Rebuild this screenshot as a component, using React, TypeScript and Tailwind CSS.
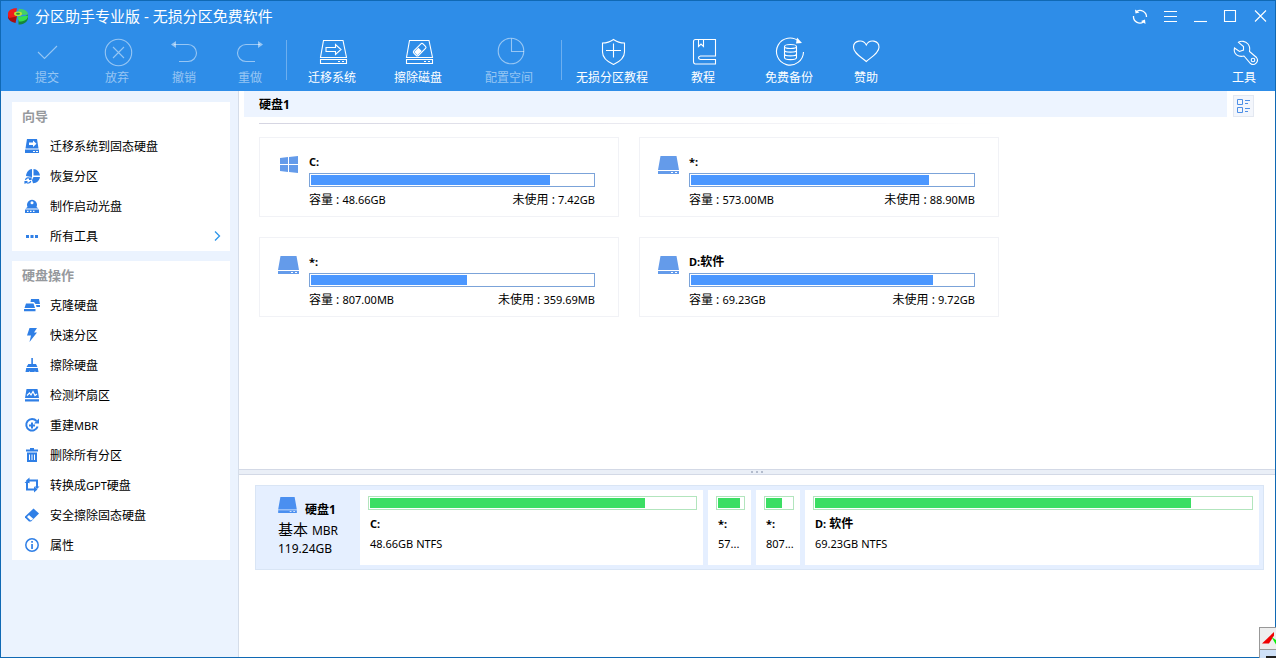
import type { ReactNode } from "react";

const stroke = { fill: "none", stroke: "currentColor", strokeWidth: 1.1 } as const;

/* ---------- toolbar icons, 32 x 32 ---------- */

const toolIcons: Record<string, ReactNode> = {
  check: <path d="M7 16l6.500 6.500L26 10" />,
  discard: (
    <>
      <circle cx="17.500" cy="16.500" r="13.200" />
      <path d="M12 11l11 11M23 11L12 22" />
    </>
  ),
  undo: (
    <>
      <path d="M6 8.500H20a8.500 8.500 0 0 1 0 17H11" />
      <path d="M3 8.500l5-3.500v7z" fill="currentColor" stroke="none" />
    </>
  ),
  redo: (
    <>
      <path d="M26 8.500H12a8.500 8.500 0 0 0 0 17H21" />
      <path d="M29 8.500l-5-3.500v7z" fill="currentColor" stroke="none" />
    </>
  ),
  migrate: (
    <>
      <path d="M7.500 4.500h19.500L30.500 21.500H4.500z" />
      <path d="M4.500 23.500h26v4h-26z" />
      <path d="M22 25.500h2M26 25.500h2" />
      <path d="M10 11.500h9.500v-3l5.500 5-5.500 5v-3H10z" />
    </>
  ),
  wipe: (
    <>
      <path d="M7.500 4.500h19.500L30.500 21.500H4.500z" />
      <path d="M4.500 23.500h26v4h-26z" />
      <path d="M22 25.500h2M26 25.500h2" />
      <g transform="rotate(-45 17.500 13.500)">
        <rect x="11" y="10.500" width="13" height="6.500" rx="1.500" />
        <rect x="12.500" y="12" width="5" height="3.500" fill="currentColor" />
      </g>
    </>
  ),
  allocate: (
    <>
      <circle cx="18" cy="15" r="12.800" />
      <path d="M18.500 2.500v13H31" />
    </>
  ),
  shield: (
    <>
      <path d="M17.500 3.500C14 6 10 7 6.500 7v9c0 6 5.500 10 11 12.500 5.500-2.500 11-6.500 11-12.500V7C25 7 21 6 17.500 3.500z" />
      <path d="M17.500 7.500v14M10 14.500h15" />
    </>
  ),
  book: (
    <>
      <path d="M28.500 20V3.500h-20q-2 0-2 2v20q0 2.500 2 2.500h20v-4.500H13.500q-2-.2-2-1.700t2-1.800h15z" />
      <path d="M11.500 3.500v7l2.500-2.500 2.500 2.500v-7" />
    </>
  ),
  backup: (
    <>
      <path d="M26 5.500A13.500 13.500 0 1 0 30.500 16" />
      <path d="M24 1.500l5 5.500-6 .5z" fill="currentColor" stroke="none" />
      <ellipse cx="17.500" cy="10.500" rx="6" ry="2" />
      <path d="M11.500 10.500v11c0 2.800 12 2.800 12 0v-11M11.500 14.200c0 2.600 12 2.600 12 0M11.500 17.900c0 2.600 12 2.600 12 0" />
    </>
  ),
  heart: (
    <path d="M16.300 25.500C11 21 3.500 17 3.500 11.200 3.500 4.500 13 2.500 16.300 9 19.500 2.500 29 4.500 29 11.200 29 17 21.500 21 16.300 25.500z" />
  ),
  wrench: (
    <>
      <path d="M10.500 6.300C13 4.500 17.500 5 20 8c2 2.500 2 5 1.500 7.500l7 6c3 4-2 9-6 6L16 20C10.500 21.500 5 18 6.500 12l5 3.500 4-1.500v-3.500z" />
      <circle cx="25" cy="24" r="1.800" />
    </>
  ),
};

type Tool = { icon: string; label: string; width: string; disabled?: boolean };

function ToolButton({ icon, label, width, disabled }: Tool) {
  return (
    <button
      type="button"
      disabled={disabled}
      className={`flex shrink-0 flex-col items-center text-xs ${width} ${disabled ? "text-white/50" : "text-white"}`}
    >
      <svg width="32" height="32" viewBox="0 0 32 32" {...stroke} aria-hidden="true">
        {toolIcons[icon]}
      </svg>
      <span className="mt-[2px] leading-4 whitespace-nowrap">{label}</span>
    </button>
  );
}

const editTools: Tool[] = [
  { icon: "check", label: "提交", width: "w-[72px]", disabled: true },
  { icon: "discard", label: "放弃", width: "w-[68px]", disabled: true },
  { icon: "undo", label: "撤销", width: "w-[66px]", disabled: true },
  { icon: "redo", label: "重做", width: "w-[66px]", disabled: true },
];
const diskTools: Tool[] = [
  { icon: "migrate", label: "迁移系统", width: "w-[86px]" },
  { icon: "wipe", label: "擦除磁盘", width: "w-[86px]" },
  { icon: "allocate", label: "配置空间", width: "w-[96px]", disabled: true },
];
const helpTools: Tool[] = [
  { icon: "shield", label: "无损分区教程", width: "w-[98px]" },
  { icon: "book", label: "教程", width: "w-[84px]" },
  { icon: "backup", label: "免费备份", width: "w-[88px]" },
  { icon: "heart", label: "赞助", width: "w-[66px]" },
];

function Logo() {
  return (
    <svg width="20" height="17" viewBox="0 0 20 17" aria-hidden="true">
      <path d="M0 6v4c1 2.500 4 4.500 7.500 5L9 8z" fill="#a80d10" />
      <path d="M0 5C1 1.500 5 0 9 .3L8 5l1 3.500L1 10C0 8.500-.2 6.500 0 5z" fill="#ee1c1c" />
      <path d="M11 .8c5 .2 9 2.500 9 5.700L13 7l-3-2.500z" fill="#45cf63" />
      <path d="M20 6.500v4c-1 4-5 6-9.500 6V12z" fill="#16863a" />
      <path d="M20 7.500c0 4-4 6-9 6L9.500 9z" fill="#35e04c" />
      <ellipse cx="10" cy="5.800" rx="4" ry="2.400" fill="#b7e337" />
      <ellipse cx="10" cy="5.800" rx="2" ry="1" fill="#2a8f3f" />
    </svg>
  );
}

const windowControls: { label: string; drawing: ReactNode }[] = [
  {
    label: "刷新",
    drawing: (
      <>
        <path d="M4.500 3.500A6.500 6.500 0 0 1 14.500 9M11.500 14A6.500 6.500 0 0 1 1.500 8" strokeWidth="1.300" />
        <path d="M3 1.500l.5 4 4-1zM13.500 16l-.5-4.500-4 1.500z" fill="currentColor" stroke="none" />
      </>
    ),
  },
  { label: "菜单", drawing: <path d="M2 3.500h13M2 8.500h13M2 13.500h13" /> },
  { label: "最小化", drawing: <path d="M2 13.500h13" /> },
  { label: "最大化", drawing: <path d="M2.500 2.500h11v11h-11z" /> },
  { label: "关闭", drawing: <path d="M3 2.500l11 11M14 2.500l-11 11" /> },
];

/* ---------- sidebar icons, 16 x 16 ---------- */

const sideIcons: Record<string, ReactNode> = {
  migrate: (
    <>
      <path d="M3 1h10l1.500 9.500h-13z" />
      <path d="M1 11.500h14V15H1z" />
      <path d="M5 4.500h4V2.500L12.500 5.800 9 9V7H5z" fill="#fff" />
      <path d="M9 13h2v1H9zM12 13h2v1h-2z" fill="#fff" />
    </>
  ),
  recover: (
    <>
      <path d="M8 1v8h-.5L2 8C2.500 4 5 1.200 8 1zM9.500 1c3.500.3 6 2.800 6.500 6.500H9.500z" />
      <path d="M9.500 9H16c-.5 3.500-3.500 6.300-7 6.200L8 12z" />
      <path d="M1.500 12a2.800 2.800 0 0 1 5-1M6.800 13a2.800 2.800 0 0 1-5 .8M7 9v2.300H5M1 15.800v-2.300h2.500" fill="none" stroke="currentColor" strokeWidth="1.200" />
    </>
  ),
  disc: (
    <>
      <path d="M3.500 9a5 5 0 1 1 9 0l2 1.500h-13z" />
      <circle cx="8" cy="4.800" r="1.500" fill="#fff" />
      <path d="M1 11.500h14V15H1z" />
      <path d="M3 12.700h1.500V14H3zM6 12.700h1.500V14H6zM9 12.700h1.500V14H9z" fill="#fff" />
    </>
  ),
  more: <path d="M2 7h3v3H2zM6.500 7h3v3h-3zM11 7h3v3h-3z" />,
  clone: (
    <>
      <path d="M7 2h8l1 5h-4.500L10 5H6.500zM12 8h4v2h-3.500z" />
      <path d="M2 6.500h7.500L11 11H.5zM0 12h11.500v2.200H0z" />
    </>
  ),
  bolt: <path d="M5.500 1H13l-3 4.500h3L5.500 15 7 8.500H3z" />,
  broom: <path d="M7.300 1h1.600v6H12l1.500 3h-11L4.300 7h3zM2.200 11h11.600l.7 4h-3l-.5-1-.5 1H6l-.5-1-.5 1H1.500z" />,
  scan: (
    <>
      <path d="M2.500 2h11L15 11H1zM1 12.200h14v2.300H1z" />
      <path d="M3 8.500L5.500 6l1.500 2 2-3.500 2 4L13 7" fill="none" stroke="#fff" strokeWidth="1.200" />
    </>
  ),
  rebuild: (
    <>
      <path d="M12.500 4A5.800 5.800 0 1 0 13.600 9.500" fill="none" stroke="currentColor" strokeWidth="2" />
      <path d="M15 1.500v5h-5z" />
      <path d="M7 5.500h2v2h2v2H9v2H7v-2H5v-2h2z" />
    </>
  ),
  trash: (
    <>
      <path d="M6 1h4v1.500h4V4.500H2V2.500h4zM3 5.500h10V15H3z" />
      <path d="M5.500 7.500v5.500M8 7.500v5.500M10.500 7.500v5.500" stroke="#fff" strokeWidth="1" />
    </>
  ),
  convert: (
    <>
      <path d="M3 5v7.500h7M5 3.500h8V11" fill="none" stroke="currentColor" strokeWidth="2" />
      <path d="M5.500.5v6L2 3.500zM10 9.500v6l3.500-3z" />
      <path d="M.5 6L3 3.500 5.500 6zM10.500 9.500h5L13 12z" />
    </>
  ),
  eraser: (
    <>
      <path d="M9.500 1.500L15 6.500 7 14.500H5L1 10.500V9.500z" />
      <path d="M5 8l4.500 4-2.800 1.500L3 10z" fill="#fff" />
    </>
  ),
  info: (
    <>
      <circle cx="8" cy="8" r="6.200" fill="none" stroke="currentColor" strokeWidth="1.500" />
      <path d="M7.200 7h1.700v5H7.200zM7.200 4h1.700v1.700H7.200z" />
    </>
  ),
};

type SideItem = { icon: string; label: string; latin?: string; rest?: string; arrow?: boolean };

const wizardItems: SideItem[] = [
  { icon: "migrate", label: "迁移系统到固态硬盘" },
  { icon: "recover", label: "恢复分区" },
  { icon: "disc", label: "制作启动光盘" },
  { icon: "more", label: "所有工具", arrow: true },
];
const diskItems: SideItem[] = [
  { icon: "clone", label: "克隆硬盘" },
  { icon: "bolt", label: "快速分区" },
  { icon: "broom", label: "擦除硬盘" },
  { icon: "scan", label: "检测坏扇区" },
  { icon: "rebuild", label: "重建", latin: "MBR" },
  { icon: "trash", label: "删除所有分区" },
  { icon: "convert", label: "转换成", latin: "GPT", rest: "硬盘" },
  { icon: "eraser", label: "安全擦除固态硬盘" },
  { icon: "info", label: "属性" },
];

function SidePanel({ title, items }: { title: string; items: SideItem[] }) {
  return (
    <section className="bg-white">
      <h2 className="h-[29px] pl-[10px] text-[13px] leading-7 font-bold text-[#96999d]">{title}</h2>
      <ul>
        {items.map((item) => (
          <li key={item.label}>
            <button type="button" className="flex h-[30px] w-full items-center pr-2 pl-3 text-left text-xs text-black">
              <svg width="16" height="16" viewBox="0 0 16 16" fill="currentColor" className="text-[#2f7fe6]" aria-hidden="true">
                {sideIcons[item.icon]}
              </svg>
              <span className="ml-[10px] flex-1 pt-[2px]">
                {item.label}
                {item.latin && <span className="text-[11px]">{item.latin}</span>}
                {item.rest}
              </span>
              {item.arrow && (
                <svg width="10" height="12" viewBox="0 0 10 12" fill="none" stroke="#2e96ea" strokeWidth="1.300" aria-hidden="true">
                  <path d="M3 1.500l4.500 4.500L3 10.500" />
                </svg>
              )}
            </button>
          </li>
        ))}
      </ul>
    </section>
  );
}

/* ---------- volumes ---------- */

function DriveIcon({ className }: { className: string }) {
  return (
    <svg viewBox="0 0 21 18" fill="currentColor" className={className} aria-hidden="true">
      <path d="M2.500 0h16L21 14H0zM0 15h21v3H0z" />
      <path d="M13 16h2v1h-2zM17 16h2v1h-2z" fill="#fff" />
    </svg>
  );
}

function WindowsIcon() {
  return (
    <svg viewBox="0 0 21 18" fill="currentColor" className="h-[18px] w-[21px]" aria-hidden="true">
      <path d="M2 2l8-1v7H2zM11 1l9-1v8h-9zM2 9h8v7l-8-1zM11 9h9v8l-9-1z" />
    </svg>
  );
}

type Volume = { letter: string; name?: string; size: string; free: string; used: number; system?: boolean };

const volumes: Volume[] = [
  { letter: "C:", size: "48.66GB", free: "7.42GB", used: 84.7, system: true },
  { letter: "*:", size: "573.00MB", free: "88.90MB", used: 84.5 },
  { letter: "*:", size: "807.00MB", free: "359.69MB", used: 55.4 },
  { letter: "D:", name: "软件", size: "69.23GB", free: "9.72GB", used: 85.8 },
];

function VolumeCard({ volume }: { volume: Volume }) {
  return (
    <article className="flex h-20 border border-[#f1f2f6] pt-[15px] pr-[23px] pl-[18px] text-black">
      <div className="w-[31px] shrink-0 pt-[3px] text-[#649bea]">
        {volume.system ? <WindowsIcon /> : <DriveIcon className="h-[18px] w-[21px]" />}
      </div>
      <div className="min-w-0 flex-1">
        <h3 className="h-5 text-[11px] leading-[18px] font-bold">
          {volume.letter}
          {volume.name && <span className="text-xs">{volume.name}</span>}
        </h3>
        <div className="h-[14px] border border-[#7ba3d9] p-px">
          <div className="h-full bg-[#4b97ff]" style={{ width: `${volume.used}%` }} />
        </div>
        <div className="flex justify-between pt-1 text-xs leading-[18px]">
          <span>
            容量 : <span className="text-[11px]">{volume.size}</span>
          </span>
          <span>
            未使用 : <span className="text-[11px]">{volume.free}</span>
          </span>
        </div>
      </div>
    </article>
  );
}

type Segment = { letter: string; name?: string; detail: string; used: number; basis: string };

const segments: Segment[] = [
  { letter: "C:", detail: "48.66GB NTFS", used: 84.7, basis: "flex-[329]" },
  { letter: "*:", detail: "57...", used: 88, basis: "w-[43px] shrink-0" },
  { letter: "*:", detail: "807...", used: 61.5, basis: "w-[44px] shrink-0" },
  { letter: "D:", name: "软件", detail: "69.23GB NTFS", used: 86.3, basis: "flex-[440]" },
];

function DiskSegment({ segment }: { segment: Segment }) {
  return (
    <div className={`min-w-0 bg-white pt-[6px] pr-[6px] pl-2 ${segment.basis}`}>
      <div className="h-[14px] border border-[#b2e5bd] p-px">
        <div className="h-full bg-[#3bde63]" style={{ width: `${segment.used}%` }} />
      </div>
      <p className="h-6 pl-[2px] text-[11px] leading-7 font-bold">
        {segment.letter}
        {segment.name && <span className="text-xs"> {segment.name}</span>}
      </p>
      <p className="pl-[2px] text-[11px] leading-5 whitespace-nowrap">{segment.detail}</p>
    </div>
  );
}

export default function App() {
  return (
    <div className="relative flex min-h-screen flex-col border border-[#1069b4] bg-white font-['Noto_Sans','Noto_Sans_CJK_SC',sans-serif]">
      <header className="h-[90px] bg-[#2e8de8] text-white">
        <div className="flex h-[30px] items-center pl-[7px]">
          <Logo />
          <h1 className="ml-[7px] text-[15px] leading-5">分区助手专业版 - 无损分区免费软件</h1>
          <div className="ml-auto flex">
            {windowControls.map((control) => (
              <button key={control.label} type="button" aria-label={control.label} className="flex h-[30px] w-[30px] items-center justify-center">
                <svg width="16" height="16" viewBox="0 0 16 16" {...stroke} className="overflow-visible" aria-hidden="true">
                  {control.drawing}
                </svg>
              </button>
            ))}
          </div>
        </div>
        <nav className="flex items-start pt-[5px] pl-[10px]">
          {editTools.map((tool) => (
            <ToolButton key={tool.label} {...tool} />
          ))}
          <span className="mt-1 mr-[2px] ml-[3px] h-10 w-px bg-white/30" />
          {diskTools.map((tool) => (
            <ToolButton key={tool.label} {...tool} />
          ))}
          <span className="mt-1 mr-px ml-1 h-10 w-px bg-white/30" />
          {helpTools.map((tool) => (
            <ToolButton key={tool.label} {...tool} />
          ))}
          <div className="ml-auto">
            <ToolButton icon="wrench" label="工具" width="w-[62px]" />
          </div>
        </nav>
      </header>

      <div className="flex flex-1">
        <aside className="flex w-[238px] shrink-0 flex-col gap-[10px] border-r border-[#d5dde9] bg-[#ebf3fe] pt-[11px] pr-2 pl-[11px]">
          <SidePanel title="向导" items={wizardItems} />
          <SidePanel title="硬盘操作" items={diskItems} />
        </aside>

        <main className="flex min-w-0 flex-1 flex-col">
          <section className="flex-1">
            <div className="flex items-start pr-[21px] pl-[5px]">
              <h2 className="h-[26px] flex-1 bg-[#edf4ff] pl-[15px] text-xs leading-[27px] font-bold text-black">硬盘1</h2>
              <button
                type="button"
                aria-label="切换视图"
                className="mt-1 ml-[6px] flex h-[22px] w-[21px] items-center justify-center border border-[#e3e8f1] bg-[#f3f6fc] text-[#4d8fe6]"
              >
                <svg width="14" height="16" viewBox="0 0 14 16" fill="none" stroke="currentColor" aria-hidden="true">
                  <path d="M.5 1.500h5v5h-5zM.5 9.500h5v5h-5zM8 2.500h5M8 5.500h3M8 10.500h5M8 13.500h3" />
                </svg>
              </button>
            </div>
            <div className="mt-[6px] ml-5 h-px max-w-[740px] bg-linear-to-r from-[#d5d5e2] to-white" />
            <div className="mt-[13px] ml-5 grid w-fit grid-cols-[360px_360px] gap-5">
              {volumes.map((volume) => (
                <VolumeCard key={volume.size} volume={volume} />
              ))}
            </div>
          </section>

          <div className="flex h-[6px] items-center justify-center gap-[3px] border-y border-[#d3d9e6] bg-[#eaeff7]">
            <span className="size-[2px] bg-[#b3bccd]" />
            <span className="size-[2px] bg-[#b3bccd]" />
            <span className="size-[2px] bg-[#b3bccd]" />
          </div>

          <section className="h-[182px] pt-[10px] pr-[11px] pl-4">
            <div className="flex h-[85px] gap-[5px] border border-[#d9e5f5] bg-[#e5efff] p-1 text-black">
              <div className="w-[95px] shrink-0 pt-[7px] pl-[18px]">
                <div className="flex h-5 items-start">
                  <DriveIcon className="h-4 w-[19px] text-[#4a8ff0]" />
                  <h3 className="ml-2 text-xs leading-[26px] font-bold">硬盘1</h3>
                </div>
                <p className="text-[15px] leading-6 whitespace-nowrap">
                  基本 <span className="text-xs">MBR</span>
                </p>
                <p className="text-xs leading-4">119.24GB</p>
              </div>
              {segments.map((segment) => (
                <DiskSegment key={segment.detail} segment={segment} />
              ))}
            </div>
          </section>
        </main>
      </div>

      <div className="absolute -right-px -bottom-px h-[31px] w-[17px] overflow-hidden border-t border-l border-[#989898] bg-[#eeeeee]">
        <svg width="16" height="30" viewBox="0 0 16 30" aria-hidden="true">
          <path d="M2 15.500L14 4v3.500L9 15.500z" fill="#f00000" />
          <path d="M11.500 9l4.500 3v4.500z" fill="#08f008" />
          <path d="M0 21h16v9H0z" fill="#cfe1f8" />
          <path d="M0 21.500h16" stroke="#989898" />
          <path d="M6 28h10v2H6z" fill="#222" />
        </svg>
      </div>
    </div>
  );
}
